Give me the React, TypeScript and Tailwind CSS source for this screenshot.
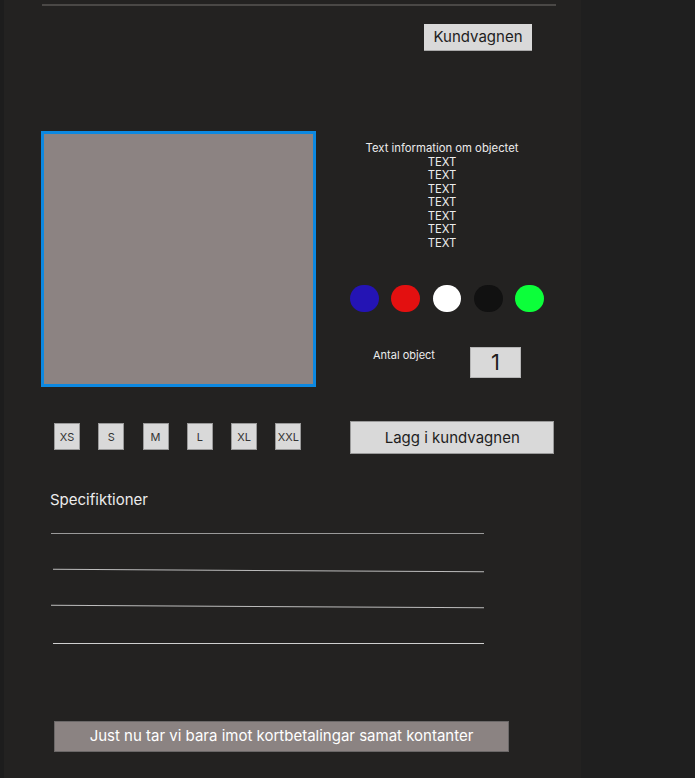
const colors = ["bg-[#2414b4]", "bg-[#e31010]", "bg-[#ffffff]", "bg-[#111111]", "bg-[#0cff3a]"];
const sizes = ["XS", "S", "M", "L", "XL", "XXL"];

function App() {
  return (
    <div className="flex h-[778px] w-[695px] bg-[#1f1f1f] font-['Inter',sans-serif]">
      <div className="w-[4px] bg-[#1d1d1d]" />
      <div className="flex w-[577px] flex-col bg-[#232221]">
        {/* top rule */}
        <div className="ml-[38px] mt-[4px] h-[2px] w-[514px] bg-[#4a4846]" />

        <div className="ml-[420px] mt-[18px]">
          <button className="h-[27px] w-[108px] border-b border-[#a9a9a9] bg-[#d9d9d9] text-[15px] text-[#1e1e1e]">
            Kundvagnen
          </button>
        </div>

        <div className="mt-[80px] flex">
          <div className="ml-[37px] h-[256px] w-[275px] border-[3px] border-[#0c88e0] bg-[#8c8382]" />
          <div className="ml-[24px] flex w-[204px] flex-col">
            <div className="mt-[11px] text-center text-[11.3px] leading-[13.5px] text-[#ececec]">
              <p>Text information om objectet</p>
              <p>TEXT</p>
              <p>TEXT</p>
              <p>TEXT</p>
              <p>TEXT</p>
              <p>TEXT</p>
              <p>TEXT</p>
              <p>TEXT</p>
            </div>
            <div className="ml-[10px] mt-[35px] flex gap-[12.5px]">
              {colors.map((c) => (
                <span key={c} className={`h-[27px] w-[29px] rounded-full ${c}`} />
              ))}
            </div>
            <div className="mt-[35px] flex items-start">
              <span className="ml-[33px] mt-[1px] w-[97px] text-[11px] leading-[14px] text-[#ececec]">
                Antal object
              </span>
              <div className="flex h-[31px] w-[51px] items-center justify-center border border-[#b5b5b5] bg-[#d9d9d9] text-[22px] text-[#1e1e1e]">
                1
              </div>
            </div>
          </div>
        </div>

        <div className="mt-[34px] flex items-start">
          <div className="ml-[50px] mt-[2px] flex gap-[18.25px]">
            {sizes.map((s) => (
              <span
                key={s}
                className="flex h-[27px] w-[26px] items-center justify-center border border-[#9a9a9a] bg-[#d9d9d9] text-[11px] text-[#333]"
              >
                {s}
              </span>
            ))}
          </div>
          <button className="ml-[49px] h-[33px] w-[204px] border border-[#9a9a9a] bg-[#d9d9d9] text-[15px] text-[#1e1e1e]">
            Lagg i kundvagnen
          </button>
        </div>

        <p className="ml-[46px] mt-[36px] text-[15px] leading-[19px] text-[#ececec]">Specifiktioner</p>

        <div className="ml-[47px] mt-[24px] h-px w-[433px] bg-[#9a9a9a]" />
        <div className="ml-[49px] mt-[35.5px] h-px w-[431px] rotate-[0.35deg] bg-[#bdbdbd]" />
        <div className="ml-[47px] mt-[35.5px] h-px w-[433px] rotate-[0.3deg] bg-[#bdbdbd]" />
        <div className="ml-[49px] mt-[35.5px] h-px w-[431px] bg-[#cfcfcf]" />

        <div className="ml-[50px] mt-[77px] flex h-[31px] w-[455px] items-center justify-center border border-[#6b6868] bg-[#8b8382] text-[15px] text-white">
          Just nu tar vi bara imot kortbetalingar samat kontanter
        </div>
      </div>
    </div>
  );
}

export default App;
